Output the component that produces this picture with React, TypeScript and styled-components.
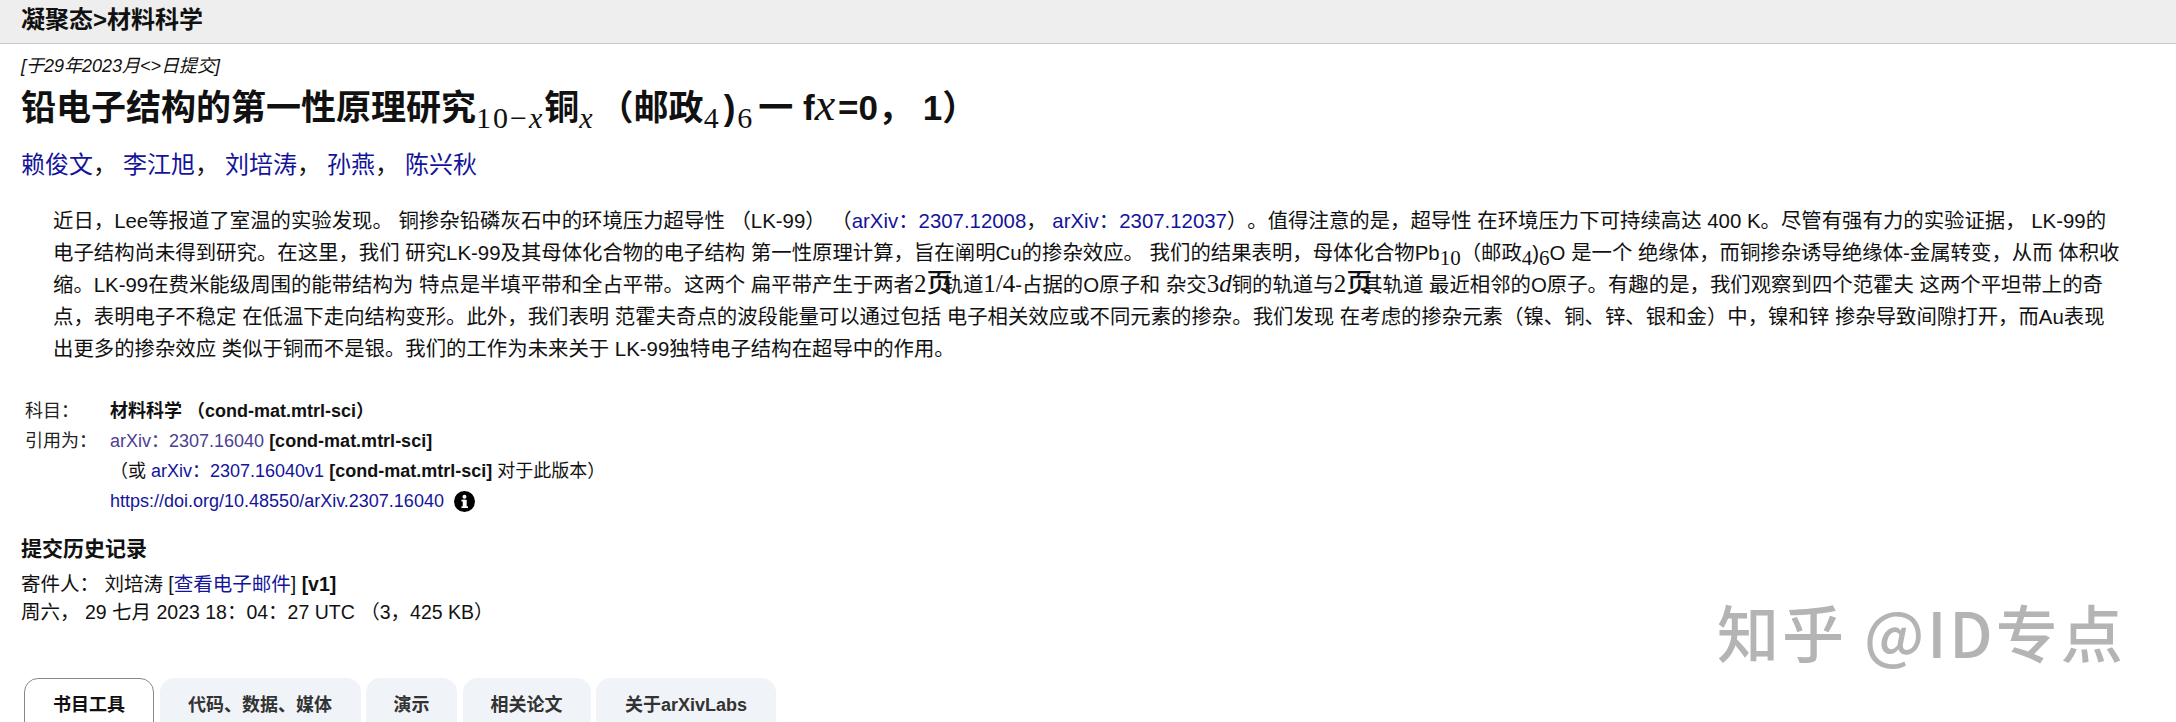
import React from "react";
import styled, { createGlobalStyle } from "styled-components";

const Global = createGlobalStyle`
  html, body { margin: 0; padding: 0; height: 722px; overflow: hidden; background: #fff; }
  body { font-family: "Liberation Sans", "Noto Sans CJK SC", sans-serif; color: #111; text-spacing-trim: space-all; }
  a { color: #14149a; text-decoration: none; }
`;

const Page = styled.div`
  position: relative;
  width: 2176px;
  height: 722px;
  overflow: hidden;
`;
const Header = styled.header`
  height: 44px;
  box-sizing: border-box;
  padding-left: 21px;
  background: #eeeeee;
  border-bottom: 1px solid #c8c8c8;
  font-size: 24px;
  font-weight: 700;
  line-height: 40px;
  color: #111;
`;
const Main = styled.main`
  display: flex;
  flex-direction: column;
  padding: 10px 0 0 21px;
`;
const DateLine = styled.div`
  font-size: 18px;
  line-height: 24px;
  font-style: italic;
`;
const Title = styled.h1`
  margin: 0;
  margin-top: 5px;
  font-size: 35px;
  font-weight: 700;
  line-height: 50px;
  white-space: nowrap;
`;
const MathSub = styled.sub<{ $pad?: number }>`
  font-family: "Liberation Serif", serif;
  font-weight: 400;
  font-size: 30px;
  letter-spacing: 2px;
  line-height: 0;
  vertical-align: -8px;
  padding-right: ${(p) => p.$pad ?? 0}px;
`;
const MathVar = styled.i`
  font-family: "Liberation Serif", serif;
  font-weight: 400;
  font-size: 46px;
  letter-spacing: 3px;
  line-height: 0;
`;
const Paren = styled.span`
  margin: 0 2px 0 3px;
`;
const Authors = styled.div`
  margin-top: 14px;
  font-size: 24px;
  line-height: 36px;
  white-space: nowrap;
`;
const Sep = styled.span`
  margin-right: 6px;
`;
const Abstract = styled.blockquote`
  margin: 22px 0 0 32px;
  font-size: 20.4px;
  line-height: 32px;
`;
const AbLine = styled.div`
  white-space: nowrap;
`;
const Sub2 = styled.sub`
  font-family: "Liberation Serif", serif;
  font-size: 21px;
  line-height: 0;
  vertical-align: -5px;
`;
const Serif = styled.span`
  font-family: "Liberation Serif", serif;
  font-size: 25px;
  line-height: 0;
`;
const BigYe = styled.span`
  font-family: "Liberation Serif", "Noto Sans CJK SC", serif;
  font-size: 26px;
  font-weight: 500;
  line-height: 0;
  margin: 0 -10px 0 0;
`;
const MetaTable = styled.div`
  display: grid;
  grid-template-columns: 85px 1fr;
  margin: 31px 0 0 4px;
  font-size: 18px;
  line-height: 30px;
`;
const Label = styled.div`
  color: #222;
`;
const Value = styled.div`
  grid-column: 2;
  white-space: nowrap;
  display: flex;
  align-items: center;
  gap: 10px;
`;
const Inline = styled.span``;
const Strong = styled.b`
  font-weight: 700;
`;
const Visited = styled.a`
  color: #4b3f92;
`;
const InfoIcon = styled.svg`
  width: 21px;
  height: 21px;
  flex: none;
`;
const SubmissionTitle = styled.h2`
  margin: 18px 0 6px;
  font-size: 21px;
  line-height: 30px;
  font-weight: 700;
`;
const SubLine = styled.div`
  font-size: 19.5px;
  line-height: 28px;
  white-space: nowrap;
`;
const Tabs = styled.nav`
  display: flex;
  gap: 5.5px;
  margin: 52px 0 0 3px;
`;
const Tab = styled.div<{ $active?: boolean; $w: number }>`
  width: ${(p) => p.$w}px;
  height: 56px;
  flex: none;
  box-sizing: border-box;
  text-align: center;
  font-size: 18px;
  font-weight: 700;
  line-height: 52px;
  border-radius: 14px 14px 0 0;
  color: ${(p) => (p.$active ? "#111" : "#333")};
  background: ${(p) => (p.$active ? "#fff" : "#f0f4f8")};
  border: ${(p) => (p.$active ? "1px solid #888" : "1px solid #f0f4f8")};
`;
const Watermark = styled.div`
  position: absolute;
  left: 1717px;
  top: 587px;
  font-family: "Noto Sans CJK SC", sans-serif;
  font-size: 62px;
  font-weight: 500;
  line-height: 88px;
  color: #b4b4b4;
  white-space: nowrap;
  letter-spacing: 3px;
`;

export default function App() {
  return (
    <Page lang="zh-CN">
      <Global />
      <Header>凝聚态&gt;材料科学</Header>
      <Main>
        <DateLine>[于29年2023月&lt;&gt;日提交]</DateLine>
        <Title>
          铅电子结构的第一性原理研究<MathSub>10−<i>x</i></MathSub>铜<MathSub $pad={4}><i>x</i></MathSub>（邮政<MathSub>4</MathSub><Paren>)</Paren><MathSub $pad={4}>6</MathSub>一 f<MathVar>x</MathVar>=0， 1）
        </Title>
        <Authors>
          <a href="#a">赖俊文</a><Sep>，</Sep><a href="#a">李江旭</a><Sep>，</Sep><a href="#a">刘培涛</a><Sep>，</Sep><a href="#a">孙燕</a><Sep>，</Sep><a href="#a">陈兴秋</a>
        </Authors>
        <Abstract>
          <AbLine>近日，Lee等报道了室温的实验发现。 铜掺杂铅磷灰石中的环境压力超导性 （LK-99） （<a href="#a">arXiv：2307.12008</a>， <a href="#a">arXiv：2307.12037</a>）。值得注意的是，超导性 在环境压力下可持续高达 400 K。尽管有强有力的实验证据， LK-99的</AbLine>
          <AbLine>电子结构尚未得到研究。在这里，我们 研究LK-99及其母体化合物的电子结构 第一性原理计算，旨在阐明Cu的掺杂效应。 我们的结果表明，母体化合物Pb<Sub2>10</Sub2>（邮政<Sub2>4</Sub2>)<Sub2>6</Sub2>O 是一个 绝缘体，而铜掺杂诱导绝缘体-金属转变，从而 体积收</AbLine>
          <AbLine>缩。LK-99在费米能级周围的能带结构为 特点是半填平带和全占平带。这两个 扁平带产生于两者<Serif>2</Serif><BigYe>页</BigYe>轨道<Serif>1/4</Serif>-占据的O原子和 杂交<Serif>3<i>d</i></Serif>铜的轨道与<Serif>2</Serif><BigYe>页</BigYe>其轨道 最近相邻的O原子。有趣的是，我们观察到四个范霍夫 这两个平坦带上的奇</AbLine>
          <AbLine>点，表明电子不稳定 在低温下走向结构变形。此外，我们表明 范霍夫奇点的波段能量可以通过包括 电子相关效应或不同元素的掺杂。我们发现 在考虑的掺杂元素（镍、铜、锌、银和金）中，镍和锌 掺杂导致间隙打开，而Au表现</AbLine>
          <AbLine>出更多的掺杂效应 类似于铜而不是银。我们的工作为未来关于 LK-99独特电子结构在超导中的作用。</AbLine>
        </Abstract>
        <MetaTable>
          <Label>科目：</Label>
          <Value><Strong>材料科学 （cond-mat.mtrl-sci）</Strong></Value>
          <Label>引用为：</Label>
          <Value><Inline><Visited href="#a">arXiv：2307.16040</Visited> <Strong>[cond-mat.mtrl-sci]</Strong></Inline></Value>
          <Value><Inline>（或 <a href="#a">arXiv：2307.16040v1</a> <Strong>[cond-mat.mtrl-sci]</Strong> 对于此版本）</Inline></Value>
          <Value>
            <a href="#a">https://doi.org/10.48550/arXiv.2307.16040</a>
            <InfoIcon viewBox="0 0 24 24">
              <circle cx="12" cy="12" r="12" fill="#000" />
              <rect x="10" y="10" width="4.5" height="9" fill="#fff" />
              <rect x="8.5" y="10" width="4" height="2" fill="#fff" />
              <rect x="8.5" y="17.5" width="7.5" height="2" fill="#fff" />
              <circle cx="12" cy="6.5" r="2.3" fill="#fff" />
            </InfoIcon>
          </Value>
        </MetaTable>
        <SubmissionTitle>提交历史记录</SubmissionTitle>
        <SubLine>寄件人： 刘培涛 [<a href="#a">查看电子邮件</a>] <Strong>[v1]</Strong></SubLine>
        <SubLine>周六， 29 七月 2023 18：04：27 UTC （3，425 KB）</SubLine>
        <Tabs>
          <Tab $active $w={130}>书目工具</Tab>
          <Tab $w={201}>代码、数据、媒体</Tab>
          <Tab $w={91}>演示</Tab>
          <Tab $w={128}>相关论文</Tab>
          <Tab $w={180}>关于arXivLabs</Tab>
        </Tabs>
      </Main>
      <Watermark>知乎 @ID专点</Watermark>
    </Page>
  );
}
